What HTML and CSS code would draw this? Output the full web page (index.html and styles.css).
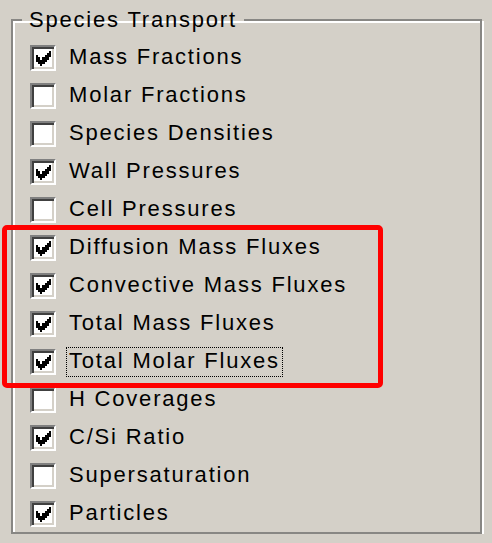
FILE: index.html
```html
<!DOCTYPE html>
<html lang="en">
<head>
    <meta charset="UTF-8">
    <title>Species Transport</title>
    <link rel="stylesheet" href="styles.css">
</head>
<body>

    <fieldset class="group">
        <legend class="group-title">Species Transport</legend>
        <div class="options">
            <div class="option"><span class="box checked"></span><span class="label">Mass Fractions</span></div>
            <div class="option"><span class="box"></span><span class="label">Molar Fractions</span></div>
            <div class="option"><span class="box"></span><span class="label">Species Densities</span></div>
            <div class="option"><span class="box checked"></span><span class="label">Wall Pressures</span></div>
            <div class="option"><span class="box"></span><span class="label">Cell Pressures</span></div>
            <div class="option"><span class="box checked"></span><span class="label">Diffusion Mass Fluxes</span></div>
            <div class="option"><span class="box checked"></span><span class="label">Convective Mass Fluxes</span></div>
            <div class="option"><span class="box checked"></span><span class="label">Total Mass Fluxes</span></div>
            <div class="option"><span class="box checked"></span><span class="label focused">Total Molar Fluxes</span></div>
            <div class="option"><span class="box"></span><span class="label">H Coverages</span></div>
            <div class="option"><span class="box checked"></span><span class="label">C/Si Ratio</span></div>
            <div class="option"><span class="box"></span><span class="label">Supersaturation</span></div>
            <div class="option"><span class="box checked"></span><span class="label">Particles</span></div>
        </div>
    </fieldset>

    <div class="highlight"></div>

    <svg width="0" height="0" class="defs">
        <symbol id="tick" viewBox="0 0 7 7">
            <path d="M0 2H1V3H2V4H3V3H4V2H5V1H6V0H7V3H6V4H5V5H4V6H3V7H2V6H1V5H0Z" fill="#000"/>
        </symbol>
    </svg>

    <script>
        document.querySelectorAll(".box.checked").forEach(box => {
            box.innerHTML = '<svg class="tick" viewBox="0 0 7 7"><use href="#tick"/></svg>';
        });
    </script>

</body>
</html>
```

FILE: styles.css
```css
body {
    margin: 0;
    background-color: #d4d0c8;
    font-family: 'Liberation Sans', Arial, sans-serif;
    font-size: 22px;
    letter-spacing: 1.8px;
    color: #000;
}
.group {
    box-sizing: border-box;
    width: 471px;
    margin: 7px 0 0 11px;
    padding: 10px 0 3px 17px;
    border: 2px solid #888784;
    box-shadow: inset 2px 2px 0 #fff, 2px 2px 0 #fff;
}
.group-title {
    margin-left: -8px;
    padding: 0 7px;
    line-height: 26px;
}
.options {
    display: flex;
    flex-direction: column;
    gap: 8px;
}
.option {
    display: flex;
    align-items: center;
    height: 30px;
}
.box {
    box-sizing: border-box;
    width: 26px;
    height: 26px;
    margin-right: 10px;
    border: 2px solid;
    border-color: #808080 #fff #fff #808080;
    box-shadow: inset 2px 2px 0 #404040, inset -2px -2px 0 #d4d0c8;
    background: #fff;
    display: flex;
    align-items: center;
    justify-content: center;
}
.tick {
    width: 15px;
    height: 15px;
    shape-rendering: crispEdges;
}
.label {
    box-sizing: border-box;
    height: 30px;
    line-height: 25px;
    padding: 0 2px 3px 2px;
    border: 1px dotted transparent;
}
.label.focused {
    border-color: #000;
}
.highlight {
    position: absolute;
    left: 2px;
    top: 225px;
    width: 381px;
    height: 163px;
    box-sizing: border-box;
    border: 5px solid #ff0000;
    border-radius: 5px;
}
.defs {
    position: absolute;
}
```
